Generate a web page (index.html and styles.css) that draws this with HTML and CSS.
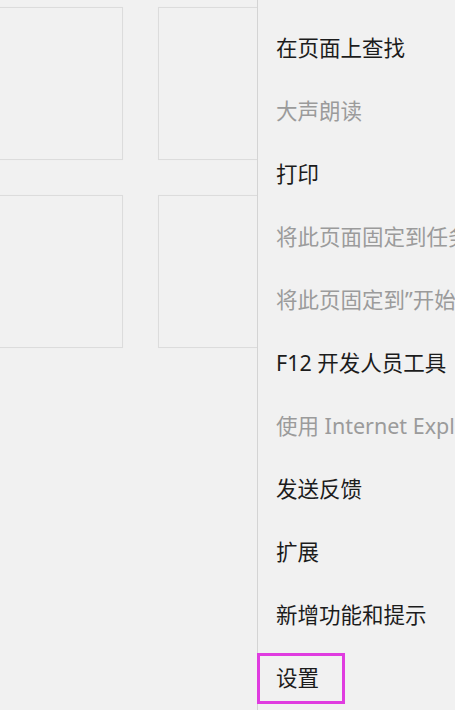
FILE: index.html
```html
<!DOCTYPE html>
<html lang="zh-CN">
<head>
  <meta charset="UTF-8" />
  <meta name="viewport" content="width=device-width,initial-scale=1" />
  <title>Edge 菜单</title>
  <link rel="stylesheet" href="styles.css">
</head>
<body>
  <div class="screen">
    <main class="tiles">
      <div class="tile-grid">
        <div class="tile"></div>
        <div class="tile"></div>
        <div class="tile"></div>
        <div class="tile"></div>
      </div>
    </main>

    <nav class="menu">
      <ul>
        <li>在页面上查找</li>
        <li class="disabled">大声朗读</li>
        <li>打印</li>
        <li class="disabled">将此页面固定到任务栏</li>
        <li class="disabled">将此页固定到”开始”屏幕</li>
        <li>F12 开发人员工具</li>
        <li class="disabled">使用 Internet Explorer 打开</li>
        <li>发送反馈</li>
        <li>扩展</li>
        <li>新增功能和提示</li>
        <li class="marked">设置</li>
      </ul>
    </nav>
  </div>
</body>
</html>
```

FILE: styles.css
```css
:root {
  --bg: #f1f1f1;
  --line: #dcdcdc;
  --text: #1c1c1c;
  --muted: #9b9b9b;
  --mark: #e03ce0;
}

*, *::before, *::after {
  box-sizing: border-box;
}

html, body {
  margin: 0;
  height: 100%;
}

body {
  background: #fff;
  font-family: "Noto Sans", "Noto Sans CJK SC", sans-serif;
  color: var(--text);
  overflow: hidden;
}

.screen {
  display: flex;
  width: 455px;
  height: 710px;
  background: var(--bg);
}

.tiles {
  flex: 0 0 257px;
  overflow: hidden;
}

.tile-grid {
  display: grid;
  grid-template-columns: 152px 152px;
  grid-auto-rows: 153px;
  gap: 35px;
  margin: 7px 0 0 -29px;
}

.tile {
  border: 1px solid var(--line);
  background: var(--bg);
  box-shadow: 0 0 1px rgba(0,0,0,0.04);
}

.menu {
  flex: 1;
  min-width: 0;
  background: var(--bg);
  border-left: 1px solid #d4d4d4;
}

.menu ul {
  list-style: none;
  margin: 0;
  padding: 16px 0 0;
}

.menu li {
  position: relative;
  height: 63px;
  line-height: 63px;
  padding-left: 18px;
  font-size: 21.5px;
  white-space: nowrap;
  overflow: hidden;
}

.menu li.disabled {
  color: var(--muted);
}

.menu li.marked {
  overflow: visible;
}

.menu li.marked::after {
  content: "";
  position: absolute;
  left: -1px;
  top: 7px;
  width: 88px;
  height: 51px;
  border: 3px solid var(--mark);
}
```
